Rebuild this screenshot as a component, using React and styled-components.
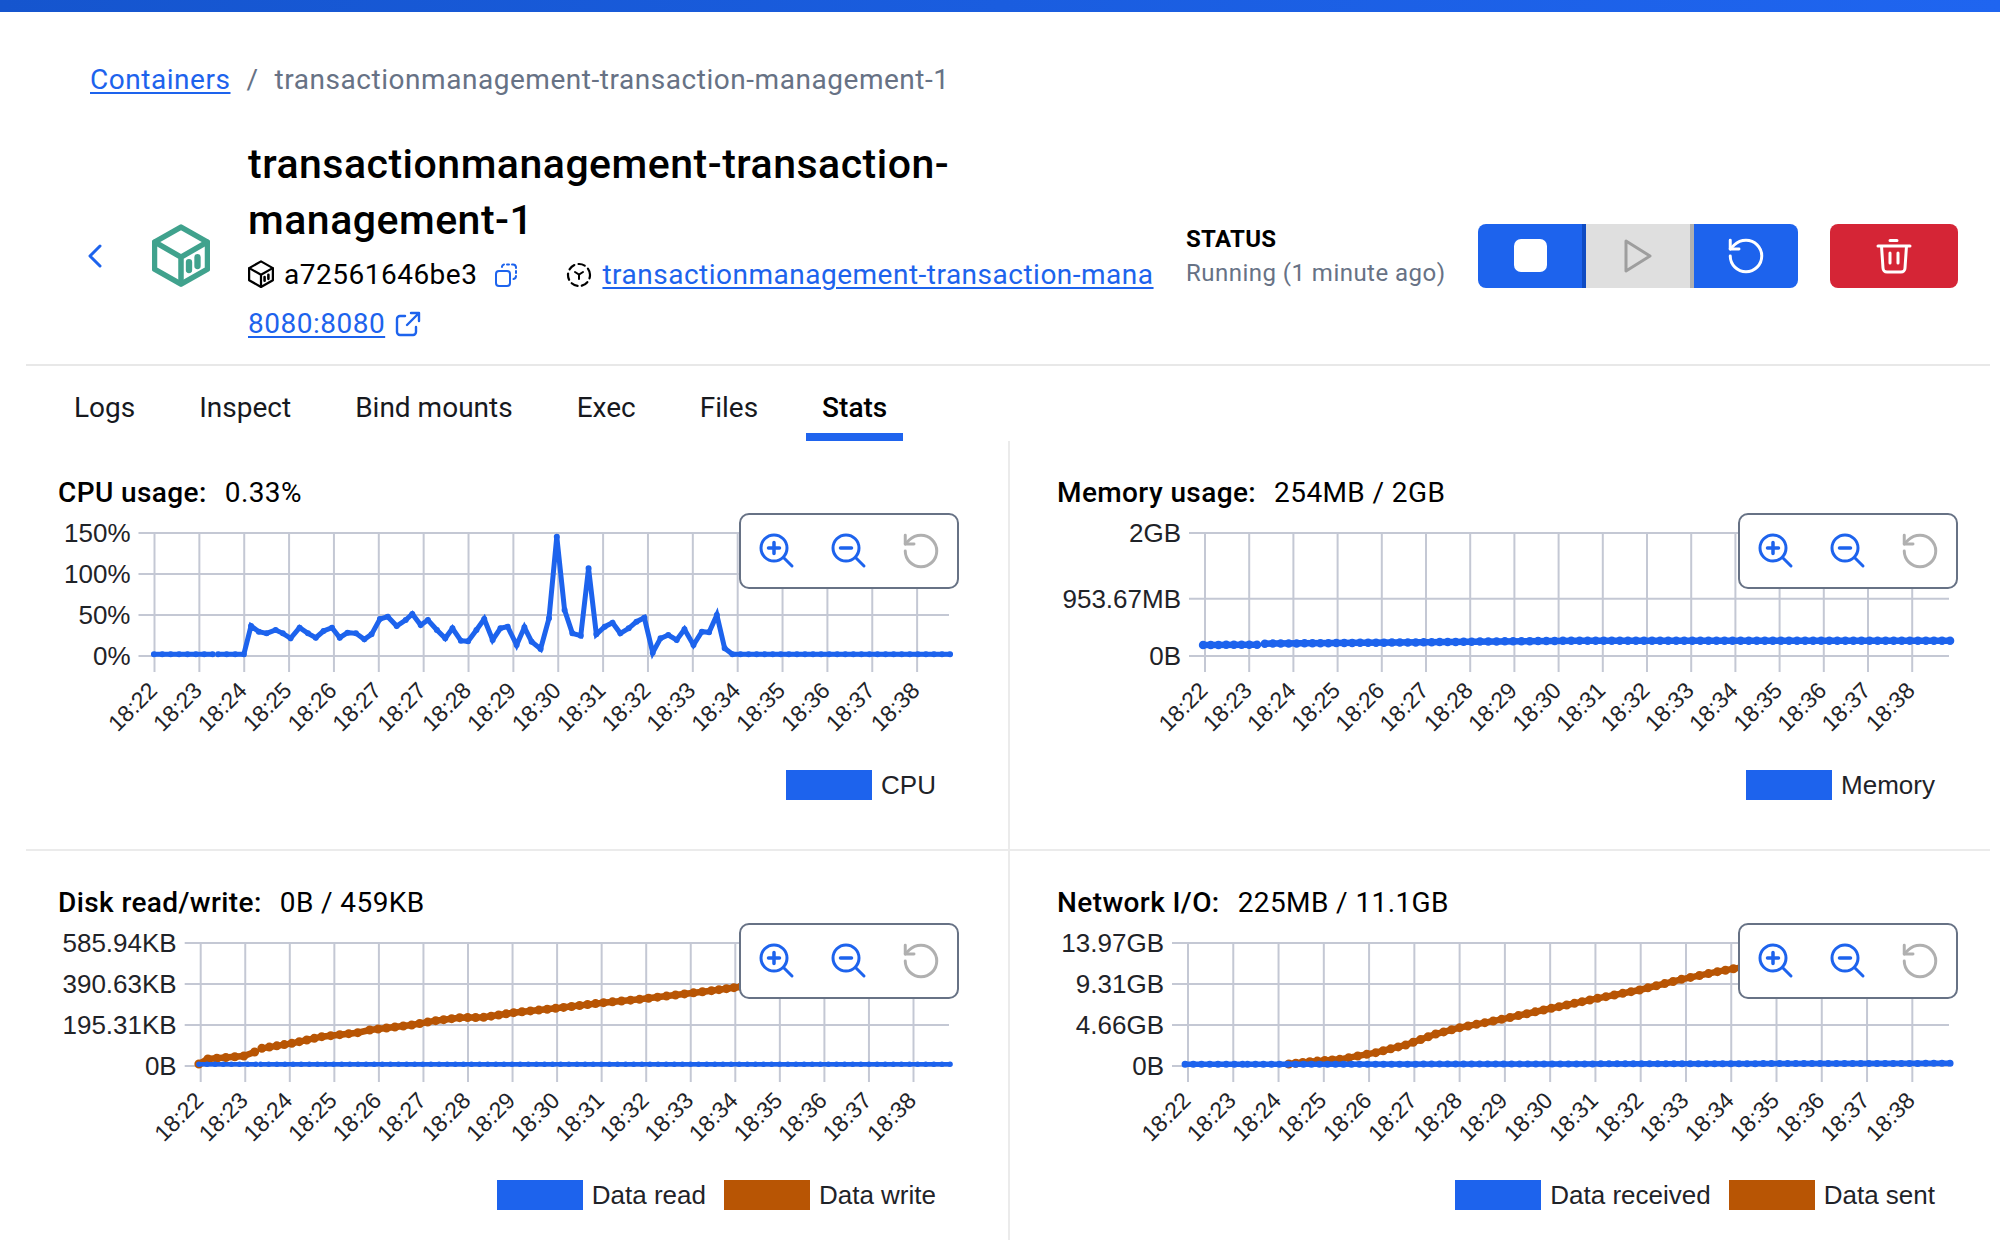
import React from "react";
import styled, { createGlobalStyle } from "styled-components";

const BLUE = "#1d63ed";
const ORANGE = "#b85504";

const GlobalStyle = createGlobalStyle`
  html, body {
    margin: 0;
    background: #fff;
  }
  body {
    font-family: Roboto, "Liberation Sans", sans-serif;
    color: #000;
  }
`;

// series are read off the picture in zoomed pixels, this moves them to chart space
const toChart = (pts) => pts.map(([x, y]) => [x / 1.668 - 18, y / 3 - 46]);

const linePath = (pts) => "M" + toChart(pts).map((p) => p.join(" ")).join("L");

const dotPath = (pts) => {
  const out = [];
  for (let i = 0; i < pts.length - 1; i++) {
    const [x0, y0] = pts[i];
    const [x1, y1] = pts[i + 1];
    const n = Math.max(1, Math.round((x1 - x0) / 13.5));
    for (let k = 0; k < n; k++) {
      out.push([x0 + ((x1 - x0) * k) / n, y0 + ((y1 - y0) * k) / n]);
    }
  }
  out.push(pts[pts.length - 1]);
  return toChart(out).map(([x, y]) => `M${x} ${y}h0`).join("");
};

const cpuData = [
  [[190, 553], [288, 553]],
  [[297, 553], [340, 553], [352, 468], [365, 485], [378, 490], [393, 480], [405, 490], [418, 505], [433, 473], [447, 490], [460, 503], [473, 483], [487, 473], [500, 503], [513, 488], [527, 490], [541, 508], [553, 493], [567, 447], [580, 440], [595, 468], [610, 450], [621, 432], [635, 465], [647, 450], [662, 480], [676, 505], [688, 475], [702, 512], [714, 514], [728, 480], [741, 447], [755, 510], [768, 475], [780, 470], [795, 525], [808, 472], [820, 515], [835, 537], [849, 445], [862, 200], [875, 420], [888, 490], [902, 497], [915, 295], [928, 493], [942, 470], [955, 458], [968, 490], [982, 475], [995, 455], [1008, 443], [1022, 548], [1035, 505], [1048, 495], [1062, 510], [1075, 478], [1090, 525], [1104, 485], [1116, 487], [1129, 435], [1142, 535], [1155, 553], [1518, 553]],
];

const memoryData = [
  [[272, 525], [362, 524]],
  [[375, 521], [640, 517], [720, 515], [900, 512], [1518, 512]],
];

const diskRead = [
  [[265, 553], [360, 553]],
  [[368, 553], [1518, 553]],
];

const diskWrite = [
  [[265, 552], [280, 537], [340, 528], [358, 516]],
  [[370, 505], [420, 490], [470, 470], [530, 458], [550, 450], [620, 435], [660, 422], [700, 413], [740, 412], [790, 398], [860, 385], [940, 368], [1000, 358], [1060, 345], [1120, 332], [1170, 320], [1518, 260]],
];

const netSent = [
  [[415, 552], [450, 545], [500, 538], [560, 518], [610, 495], [660, 462], [700, 443], [770, 418], [840, 390], [930, 355], [1000, 330], [1070, 298], [1130, 275], [1170, 262], [1518, 170]],
];

const netReceived = [
  [[242, 553], [338, 553]],
  [[346, 553], [800, 552], [1518, 550]],
];

const minutes = (from, to) => {
  const list = [];
  for (let m = from; m <= to; m++) list.push(`18:${m}`);
  return list;
};

const cpuLabels = [...minutes(22, 27), ...minutes(27, 38)];

const charts = [
  {
    name: "CPU usage:",
    value: "0.33%",
    axisX: 96.5,
    step: 44.86,
    labels: cpuLabels,
    yTicks: [["150%", 17], ["100%", 58], ["50%", 99], ["0%", 140]],
    series: [{ color: BLUE, data: cpuData, width: 5, dot: 6 }],
    legend: [{ color: BLUE, label: "CPU" }],
  },
  {
    name: "Memory usage:",
    value: "254MB / 2GB",
    axisX: 147,
    step: 44.2,
    labels: minutes(22, 38),
    yTicks: [["2GB", 17], ["953.67MB", 82.7], ["0B", 140]],
    series: [{ color: BLUE, data: memoryData, width: 6.5, dot: 8.5 }],
    legend: [{ color: BLUE, label: "Memory" }],
    right: true,
  },
  {
    name: "Disk read/write:",
    value: "0B / 459KB",
    axisX: 142.7,
    step: 44.55,
    labels: minutes(22, 38),
    yTicks: [["585.94KB", 17], ["390.63KB", 58], ["195.31KB", 99], ["0B", 140]],
    series: [
      { color: ORANGE, data: diskWrite, width: 6.5, dot: 9 },
      { color: BLUE, data: diskRead, width: 4.5, dot: 5.5 },
    ],
    legend: [{ color: BLUE, label: "Data read" }, { color: ORANGE, label: "Data write" }],
  },
  {
    name: "Network I/O:",
    value: "225MB / 11.1GB",
    axisX: 130,
    step: 45.27,
    labels: minutes(22, 38),
    yTicks: [["13.97GB", 17], ["9.31GB", 58], ["4.66GB", 99], ["0B", 140]],
    series: [
      { color: ORANGE, data: netSent, width: 6.5, dot: 9 },
      { color: BLUE, data: netReceived, width: 5.5, dot: 7 },
    ],
    legend: [{ color: BLUE, label: "Data received" }, { color: ORANGE, label: "Data sent" }],
    right: true,
  },
];

const tabs = ["Logs", "Inspect", "Bind mounts", "Exec", "Files", "Stats"];

const IconSvg = styled.svg`
  display: block;
  flex-shrink: 0;
`;

const ChevronIcon = () => (
  <IconSvg width="16" height="24" viewBox="0 0 16 24" fill="none" stroke={BLUE} strokeWidth="3" strokeLinecap="round" strokeLinejoin="round">
    <path d="M13 2 3 12l10 10" />
  </IconSvg>
);

const CubeIcon = ({ size, color, width }) => (
  <IconSvg width={size} height={size * 1.09} viewBox="0 0 58 63" fill="none" stroke={color} strokeWidth={width} strokeLinejoin="round" strokeLinecap="round">
    <path d="M29 3 55.500 18V45L29 60 2.500 45V18Z" />
    <path d="M3 18 29 33 55 18M29 33V59" />
    <path d="M37 38V46M45.500 33V42" strokeWidth={width * 1.15} />
  </IconSvg>
);

const CopyIcon = () => (
  <IconSvg width="24" height="24" viewBox="0 0 24 24" fill="none" stroke={BLUE} strokeWidth="2" strokeLinecap="round" strokeLinejoin="round">
    <rect x="2" y="8" width="14" height="15" rx="3" />
    <path d="M8 4V3.500A2.500 2.500 0 0 1 10 1.500M13 1.500h2M18 1.500h1A3 3 0 0 1 22 4v1M22 8v2M22 13a3 3 0 0 1-2.500 3" />
  </IconSvg>
);

const ComposeIcon = () => (
  <IconSvg width="26" height="26" viewBox="0 0 26 26" fill="none" stroke="#000" strokeWidth="2.200" strokeLinecap="round">
    <circle cx="13" cy="13" r="11" strokeDasharray="6.500 4.300" strokeDashoffset="3" />
    <path d="M9 10l4 2.500L17 10M13 12.500V17" strokeWidth="2" />
  </IconSvg>
);

const ExternalIcon = () => (
  <IconSvg width="26" height="26" viewBox="0 0 26 26" fill="none" stroke={BLUE} strokeWidth="2.400" strokeLinecap="round" strokeLinejoin="round">
    <path d="M10 5H5a3 3 0 0 0-3 3v13a3 3 0 0 0 3 3h13a3 3 0 0 0 3-3v-5" />
    <path d="M16 2h8v8M24 2 12 14" />
  </IconSvg>
);

const PlayIcon = () => (
  <IconSvg width="28" height="34" viewBox="0 0 28 34" fill="none" stroke="#9e9e9e" strokeWidth="3" strokeLinejoin="round">
    <path d="M2 2 26 17 2 32Z" />
  </IconSvg>
);

const RestartIcon = ({ color = "#fff" }) => (
  <IconSvg width="42" height="42" viewBox="0 0 24 24" fill="none" stroke={color} strokeWidth="1.700" strokeLinecap="round" strokeLinejoin="round">
    <path d="M3 12a9 9 0 1 0 9-9 9.750 9.750 0 0 0-6.740 2.740L3 8" />
    <path d="M3 3v5h5" />
  </IconSvg>
);

const TrashIcon = () => (
  <IconSvg width="36" height="36" viewBox="0 0 36 36" fill="none" stroke="#fff" strokeWidth="3" strokeLinecap="round" strokeLinejoin="round">
    <path d="M14 2.500h7M2 8h32M5.500 8l1.500 22a4 4 0 0 0 4 4h14a4 4 0 0 0 4-4l1.500-22M14 15v10M22 15v10" />
  </IconSvg>
);

const ZoomIcon = ({ minus }) => (
  <IconSvg width="36" height="36" viewBox="0 0 36 36" fill="none" stroke={BLUE} strokeWidth="3" strokeLinecap="round">
    <circle cx="15" cy="15" r="13" />
    <path d="M24.500 24.500 33 33" />
    <path d={minus ? "M9.500 15h11" : "M9.500 15h11M15 9.500v11"} strokeWidth="3.500" />
  </IconSvg>
);

const PlotSvg = styled.svg`
  display: block;
  overflow: visible;
  font-family: "Liberation Sans", Arial, sans-serif;
  font-size: 26px;
  fill: #1f2328;
`;

const TimeLabel = styled.text`
  font-size: 23px;
`;

const Plot = ({ chart }) => {
  const { axisX, step, labels, yTicks, series } = chart;
  const xs = labels.map((_, i) => axisX + i * step);
  return (
    <PlotSvg width="924" height="244">
      <g stroke="#c4c8d4" strokeWidth="2" fill="none">
        {yTicks.map(([, y]) => (
          <path key={y} d={`M${axisX - 16} ${y}H891`} />
        ))}
        {xs.map((x) => (
          <path key={x} d={`M${x} 17V156`} />
        ))}
      </g>
      {yTicks.map(([label, y]) => (
        <text key={label} x={axisX - 24} y={y + 9} textAnchor="end">{label}</text>
      ))}
      {labels.map((label, i) => (
        <TimeLabel key={i} textAnchor="end" transform={`translate(${xs[i] + 4} ${176}) rotate(-45)`}>{label}</TimeLabel>
      ))}
      {series.map((s, i) => (
        <g key={i} fill="none" stroke={s.color} strokeLinecap="round">
          {s.data.map((seg, k) => (
            <g key={k}>
              <path d={linePath(seg)} strokeWidth={s.width} strokeLinejoin="miter" strokeLinecap="butt" />
              <path d={dotPath(seg)} strokeWidth={s.dot} />
            </g>
          ))}
        </g>
      ))}
    </PlotSvg>
  );
};

const Page = styled.div`
  width: 2000px;
  height: 1240px;
  overflow: hidden;
`;

const TopBar = styled.div`
  height: 12px;
  background: linear-gradient(90deg, #1555ce, #1f65f0);
`;

const Breadcrumb = styled.nav`
  display: flex;
  align-items: center;
  gap: 16px;
  height: 34px;
  margin: 50px 0 39px 90px;
  font-size: 28px;
  letter-spacing: 0.54px;
  color: #677285;
`;

const Link = styled.a`
  flex-shrink: 0;
  color: ${BLUE};
  text-decoration: underline;
  text-decoration-thickness: 2px;
  text-underline-offset: 3px;
`;

const Header = styled.header`
  display: flex;
  align-items: flex-start;
  height: 229px;
  margin: 0 10px 0 26px;
  border-bottom: 2px solid #e8e8e8;
  box-sizing: content-box;
`;

const Side = styled.div`
  display: flex;
  align-self: center;
  align-items: center;
  margin-top: 12px;
  margin-left: ${(p) => p.$left}px;
`;

const Info = styled.div`
  width: 905px;
  margin: 1px 0 0 38px;
`;

const Title = styled.h1`
  margin: 0;
  font-size: 41px;
  line-height: 56px;
  font-weight: 500;
  letter-spacing: 0.5px;
`;

const MetaRow = styled.div`
  display: flex;
  align-items: center;
  height: 45px;
  margin-top: 4px;
  font-size: 28px;
  letter-spacing: 0.5px;
  white-space: nowrap;
`;

const MetaId = styled.span`
  margin: 0 17px 0 10px;
`;

const ComposeMark = styled.span`
  display: flex;
  margin: 0 10px 0 48px;
`;

const PortIcon = styled.span`
  display: flex;
  margin-left: 10px;
`;

const StatusBlock = styled.div`
  width: 292px;
  margin-left: 33px;
`;

const StatusTitle = styled.div`
  font-size: 24px;
  line-height: 34px;
  font-weight: 700;
  letter-spacing: 0.3px;
`;

const StatusText = styled.div`
  font-size: 24px;
  line-height: 34px;
  letter-spacing: 0.47px;
  color: #677285;
`;

const ButtonGroup = styled.div`
  display: flex;
  height: 64px;
  border-radius: 8px;
  overflow: hidden;
`;

const DeleteWrap = styled.div`
  margin-left: 32px;
`;

const ActionButton = styled.button`
  display: flex;
  align-items: center;
  justify-content: center;
  width: ${(p) => p.$width || 104}px;
  height: 64px;
  padding: 0;
  border: 0;
  border-right: ${(p) => (p.$edge ? `4px solid ${p.$edge}` : "0")};
  border-radius: ${(p) => p.$radius || 0}px;
  box-sizing: ${(p) => (p.$edge ? "content-box" : "border-box")};
  background: ${(p) => p.$bg};
`;

const StopMark = styled.span`
  display: block;
  width: 33px;
  height: 33px;
  border-radius: 7px;
  background: #fff;
`;

const TabBar = styled.div`
  display: flex;
  gap: 32px;
  height: 75px;
  padding-left: 58px;
`;

const Tab = styled.div`
  display: flex;
  align-items: center;
  box-sizing: border-box;
  height: 75px;
  padding: 15px 16px 0;
  font-size: 28px;
  font-weight: ${(p) => (p.$active ? 500 : 400)};
  border-bottom: 8px solid ${(p) => (p.$active ? "#1f64ee" : "transparent")};
  color: ${(p) => (p.$active ? "#000" : "#17191e")};
`;

const Grid = styled.div`
  display: grid;
  grid-template-columns: 982px 982px;
  grid-template-rows: 410px 389px;
  margin-left: 26px;
`;

const Cell = styled.section`
  position: relative;
  box-sizing: border-box;
  padding: 31px 0 0 ${(p) => (p.$right ? 48 : 32)}px;
  border-left: ${(p) => (p.$right ? "2px solid #ebebeb" : "0")};
  border-bottom: ${(p) => (p.$top ? "2px solid #ebebeb" : "0")};
`;

const ChartTitle = styled.div`
  display: flex;
  gap: 18px;
  height: 40px;
  margin-left: ${(p) => (p.$right ? -1 : 0)}px;
  align-items: center;
  font-size: 28px;
  letter-spacing: 0.4px;
`;

const ChartName = styled.span`
  font-weight: 500;
`;

const PlotWrap = styled.div`
  margin-top: 4px;
`;

const ZoomPanel = styled.div`
  position: absolute;
  top: 72px;
  right: ${(p) => (p.$right ? 32 : 49)}px;
  display: flex;
  width: 220px;
  height: 76px;
  box-sizing: border-box;
  border: 2px solid #677285;
  border-radius: 10px;
  background: #fff;
`;

const ZoomButton = styled.div`
  flex: 1;
  display: flex;
  align-items: center;
  justify-content: center;
`;

const Legend = styled.div`
  display: flex;
  justify-content: flex-end;
  gap: 18px;
  margin-top: 10px;
  padding-right: ${(p) => (p.$right ? 55 : 72)}px;
  font-family: "Liberation Sans", Arial, sans-serif;
  font-size: 26px;
  line-height: 30px;
  color: #1f2328;
`;

const LegendItem = styled.div`
  display: flex;
  gap: 9px;
`;

const Swatch = styled.span`
  width: 86px;
  height: 30px;
  background: ${(p) => p.$color};
`;

const ChartCard = ({ chart, top }) => (
  <Cell $right={chart.right} $top={top}>
    <ChartTitle $right={chart.right}>
      <ChartName>{chart.name}</ChartName>
      <span>{chart.value}</span>
    </ChartTitle>
    <PlotWrap>
      <Plot chart={chart} />
    </PlotWrap>
    <ZoomPanel $right={chart.right}>
      <ZoomButton><ZoomIcon /></ZoomButton>
      <ZoomButton><ZoomIcon minus /></ZoomButton>
      <ZoomButton><RestartIcon color="#b0b0b0" /></ZoomButton>
    </ZoomPanel>
    <Legend $right={chart.right}>
      {chart.legend.map((item) => (
        <LegendItem key={item.label}>
          <Swatch $color={item.color} />
          {item.label}
        </LegendItem>
      ))}
    </Legend>
  </Cell>
);

export default function App() {
  return (
    <Page>
      <GlobalStyle />
      <TopBar />
      <Breadcrumb>
        <Link>Containers</Link>
        <span>/</span>
        <span>transactionmanagement-transaction-management-1</span>
      </Breadcrumb>
      <Header>
        <Side $left={61}><ChevronIcon /></Side>
        <Side $left={49}><CubeIcon size={58} color="#40a28d" width={5.5} /></Side>
        <Info>
          <Title>transactionmanagement-transaction-management-1</Title>
          <MetaRow>
            <CubeIcon size={26} color="#000" width={5} />
            <MetaId>a72561646be3</MetaId>
            <CopyIcon />
            <ComposeMark><ComposeIcon /></ComposeMark>
            <Link>transactionmanagement-transaction-mana</Link>
          </MetaRow>
          <MetaRow>
            <Link>8080:8080</Link>
            <PortIcon><ExternalIcon /></PortIcon>
          </MetaRow>
        </Info>
        <Side $left={0}>
          <StatusBlock>
            <StatusTitle>STATUS</StatusTitle>
            <StatusText>Running (1 minute ago)</StatusText>
          </StatusBlock>
          <ButtonGroup>
            <ActionButton $bg="#1d63ed" $edge="#0f4bc2"><StopMark /></ActionButton>
            <ActionButton $bg="#dfdfdf" $edge="#b0b0b0"><PlayIcon /></ActionButton>
            <ActionButton $bg="#1d63ed"><RestartIcon /></ActionButton>
          </ButtonGroup>
          <DeleteWrap>
            <ActionButton $bg="#d52536" $width={128} $radius={8}><TrashIcon /></ActionButton>
          </DeleteWrap>
        </Side>
      </Header>
      <TabBar>
        {tabs.map((t) => (
          <Tab key={t} $active={t === "Stats"}>{t}</Tab>
        ))}
      </TabBar>
      <Grid>
        {charts.map((c, i) => (
          <ChartCard key={c.name} chart={c} top={i < 2} />
        ))}
      </Grid>
    </Page>
  );
}
